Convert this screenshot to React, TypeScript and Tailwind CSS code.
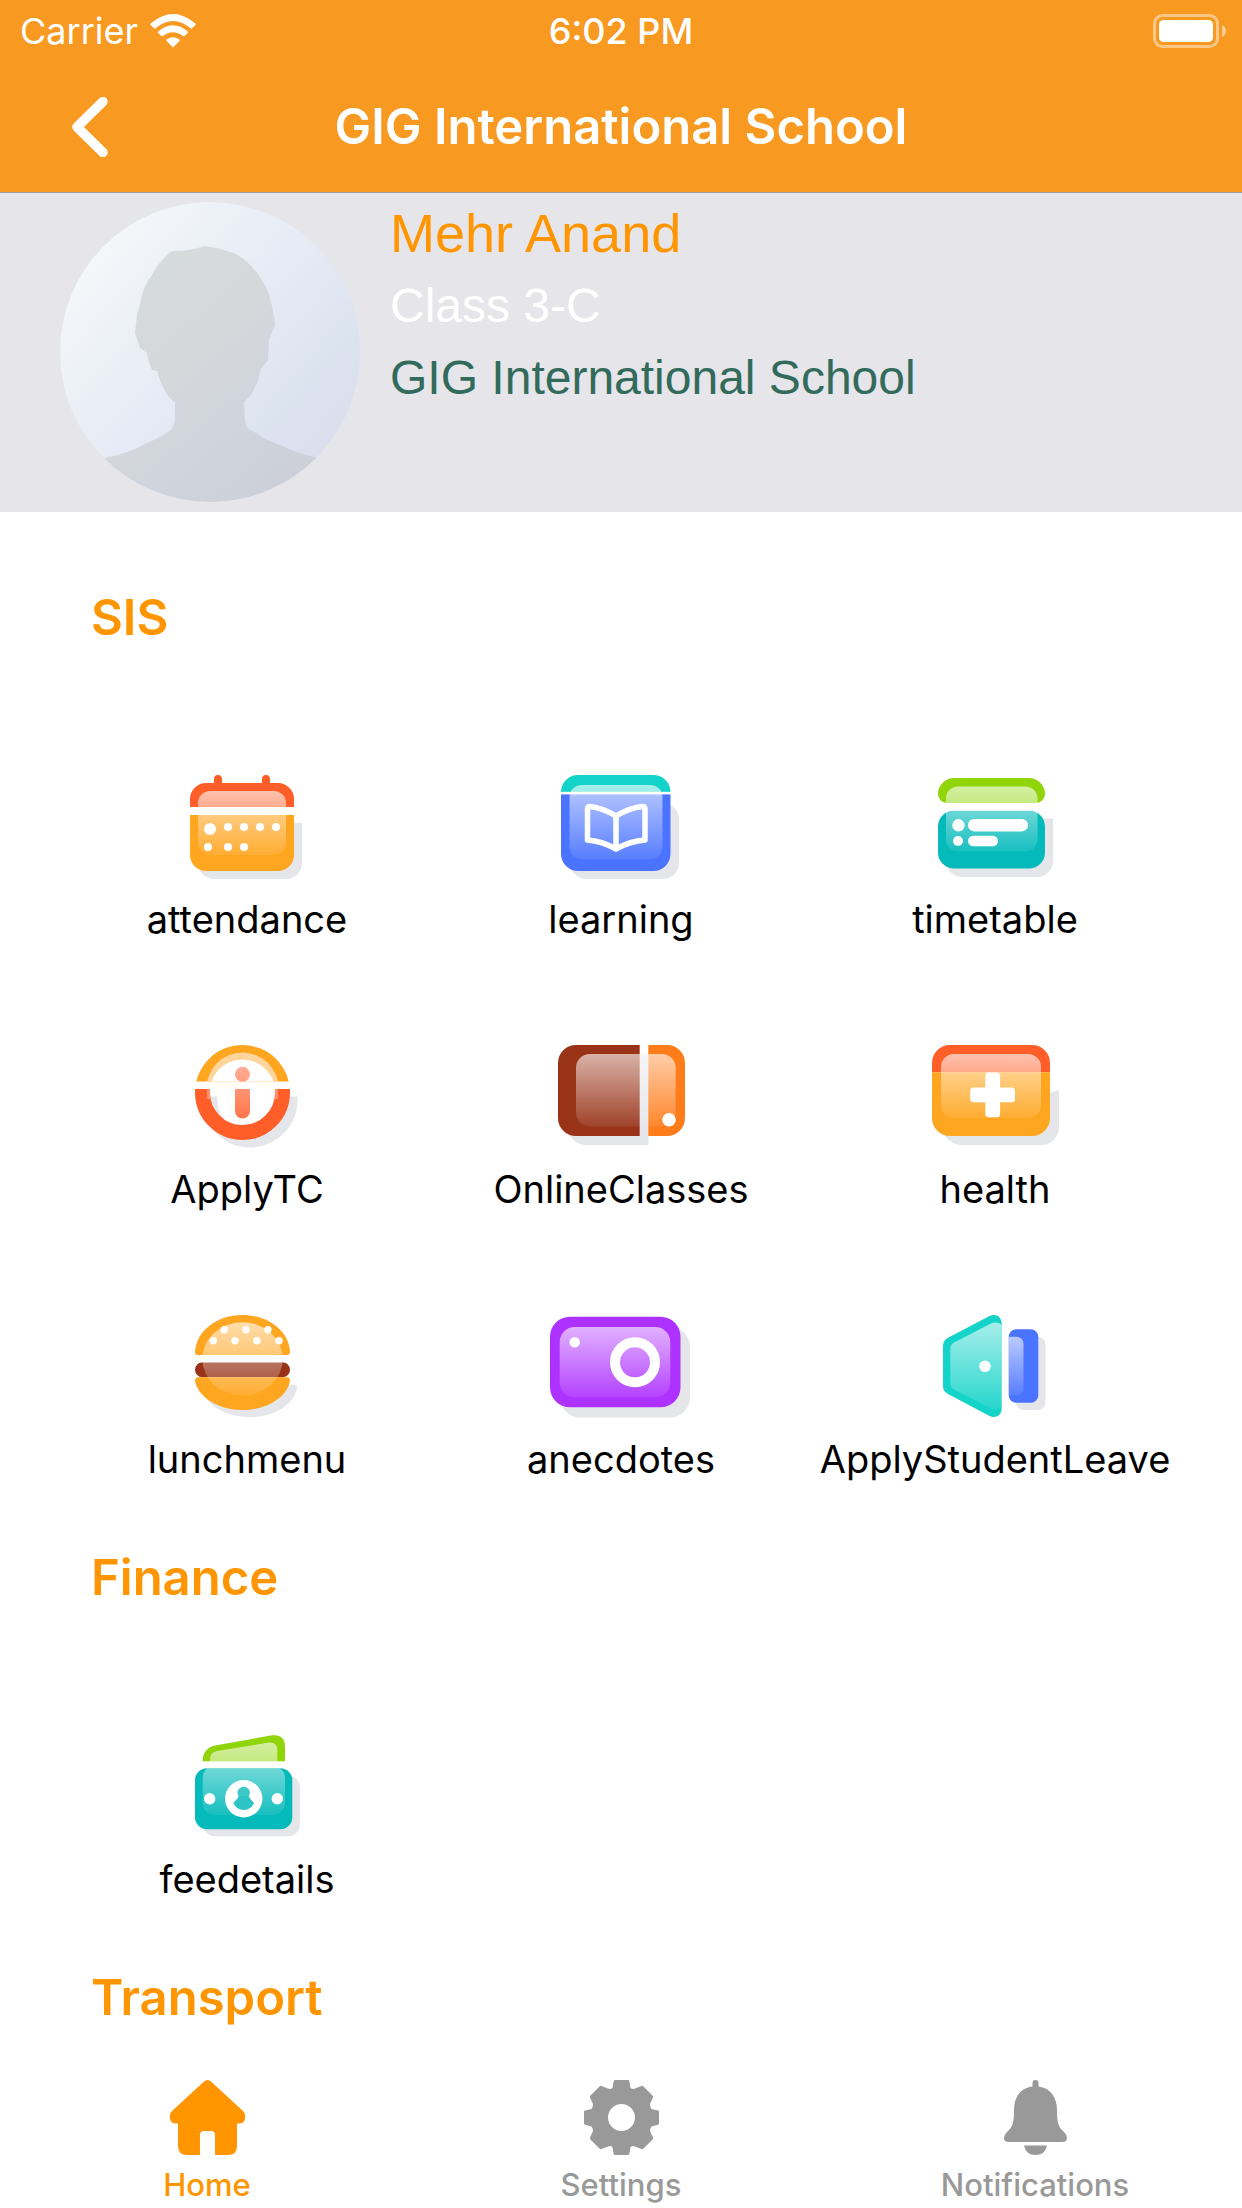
import { useId, type ReactNode } from "react";

const SHADOW = "#e5e6ea";

function Tile({ children }: { children: (glass: string) => ReactNode }) {
  const id = useId();
  return (
    <svg viewBox="0 0 144 105" className="h-[105px] w-36" aria-hidden="true">
      <defs>
        <linearGradient id={id} x1="0" y1="0" x2="0" y2="1">
          <stop offset="0" stopColor="#fff" stopOpacity="0.62" />
          <stop offset="1" stopColor="#fff" stopOpacity="0.08" />
        </linearGradient>
      </defs>
      {children(`url(#${id})`)}
    </svg>
  );
}

function AttendanceIcon() {
  return (
    <Tile>
      {(glass) => (
        <>
          <path d="M23 48H127V88a16 16 0 0 1-16 16H39a16 16 0 0 1-16-16Z" fill={SHADOW} />
          <path d="M15 40H119V80a16 16 0 0 1-16 16H31a16 16 0 0 1-16-16Z" fill="#ffa621" />
          <path
            d="M15 32V24A16 16 0 0 1 31 8H39V4a4 4 0 0 1 8 0V8H87V4a4 4 0 0 1 8 0V8H103A16 16 0 0 1 119 24V32Z"
            fill="#ff5e29"
          />
          <rect x="23" y="16" width="88" height="64" rx="12" fill={glass} />
          <rect x="14" y="32" width="106" height="8" fill="#fff" />
          <g fill="#fff">
            <circle cx="35" cy="54" r="6" />
            <circle cx="53" cy="52" r="4" />
            <circle cx="69" cy="52" r="4" />
            <circle cx="85" cy="52" r="4" />
            <circle cx="101" cy="52" r="4" />
            <circle cx="33" cy="72" r="4" />
            <circle cx="53" cy="72" r="4" />
            <circle cx="69" cy="72" r="4" />
          </g>
        </>
      )}
    </Tile>
  );
}

function LearningIcon() {
  return (
    <Tile>
      {(glass) => (
        <>
          <path d="M20 28H114a16 16 0 0 1 16 16V88a16 16 0 0 1-16 16H38a18 18 0 0 1-18-18Z" fill={SHADOW} />
          <path d="M12 18V17A17 17 0 0 1 29 0H104.500A17 17 0 0 1 121.500 17V18Z" fill="#14d3c9" />
          <path d="M12 18H121.500V79a17 17 0 0 1-17 17H29a17 17 0 0 1-17-17Z" fill="#4a73ff" />
          <rect x="12" y="16.800" width="110" height="2.600" fill="#fff" />
          <rect x="20.500" y="10" width="93" height="74" rx="12" fill={glass} />
          <path
            d="M67 41Q54 33 41 31.500Q38.500 31.500 38.500 34V65Q53 66 67 74Q81 66 96 65V34Q96 31.500 93 31.500Q80 33 67 41V74"
            fill="none"
            stroke="#fff"
            strokeWidth="5.500"
            strokeLinejoin="round"
          />
        </>
      )}
    </Tile>
  );
}

function TimetableIcon() {
  return (
    <Tile>
      {(glass) => (
        <>
          <path d="M23 43.500H130V86a16 16 0 0 1-16 16H39a16 16 0 0 1-16-16Z" fill={SHADOW} />
          <path d="M31 3H106a16 16 0 0 1 16 16a9 9 0 0 1-9 9H24a9 9 0 0 1-9-9A16 16 0 0 1 31 3Z" fill="#90d40a" />
          <rect x="15" y="35.500" width="107" height="58" rx="16" fill="#04babb" />
          <rect x="23" y="11.500" width="91.500" height="65" rx="12" fill={glass} />
          <rect x="15" y="28" width="107" height="7.500" fill="#fff" />
          <g fill="#fff">
            <circle cx="35.500" cy="50.300" r="6.200" />
            <rect x="45" y="44" width="60" height="12.400" rx="6.200" />
            <circle cx="35" cy="66" r="5" />
            <rect x="45" y="60.800" width="30" height="10.400" rx="5.200" />
          </g>
        </>
      )}
    </Tile>
  );
}

function ApplyTcIcon() {
  const id = useId();
  return (
    <Tile>
      {() => (
        <>
          <defs>
            <clipPath id={`${id}t`}>
              <rect x="0" y="0" width="144" height="36.500" />
            </clipPath>
            <clipPath id={`${id}b`}>
              <rect x="0" y="44" width="144" height="61" />
            </clipPath>
            <clipPath id={`${id}s`}>
              <rect x="0" y="51.500" width="144" height="54" />
            </clipPath>
            <linearGradient id={`${id}i`} x1="0" y1="20" x2="0" y2="74" gradientUnits="userSpaceOnUse">
              <stop offset="0" stopColor="#ffb099" />
              <stop offset="1" stopColor="#ff7448" />
            </linearGradient>
          </defs>
          <circle cx="75" cy="55" r="40" fill="none" stroke={SHADOW} strokeWidth="15" clipPath={`url(#${id}s)`} />
          <g clipPath={`url(#${id}b)`}>
            <circle cx="67.500" cy="47.500" r="40" fill="none" stroke="#ff5e29" strokeWidth="15" />
            <path d="M33.500 42V54" stroke="#ff9070" strokeWidth="3" />
            <path d="M101.500 42V54" stroke="#ff9070" strokeWidth="3" />
          </g>
          <g clipPath={`url(#${id}t)`}>
            <circle cx="67.500" cy="47.500" r="47.500" fill="#ffa621" />
            <circle cx="67.500" cy="43.500" r="36" fill="#ffd59c" />
            <circle cx="67.500" cy="47.500" r="33" fill="#fff" />
          </g>
          <circle cx="67.500" cy="29.300" r="7.500" fill={`url(#${id}i)`} />
          <path d="M60 44H75V66a7.500 7.500 0 0 1-15 0Z" fill={`url(#${id}i)`} />
        </>
      )}
    </Tile>
  );
}

function OnlineClassesIcon() {
  return (
    <Tile>
      {(glass) => (
        <>
          <path d="M18 9H99.500V100H36a20 20 0 0 1-18-18Z" fill={SHADOW} />
          <path d="M90.700 0H27A18 18 0 0 0 9 18V73A18 18 0 0 0 27 91H90.700Z" fill="#983318" />
          <path d="M99.300 0H118A18 18 0 0 1 136 18V73A18 18 0 0 1 118 91H99.300Z" fill="#ff7c1a" />
          <rect x="27" y="9" width="99.700" height="72.500" rx="14" fill={glass} />
          <circle cx="120" cy="74.700" r="6.800" fill="#fff" />
        </>
      )}
    </Tile>
  );
}

function HealthIcon() {
  return (
    <Tile>
      {(glass) => (
        <>
          <path d="M18 80L127 47.500L136 45V82a18 18 0 0 1-18 18H38a22 22 0 0 1-20-20Z" fill={SHADOW} />
          <path d="M9 27.300V18A18 18 0 0 1 27 0H109A18 18 0 0 1 127 18V27.300Z" fill="#ff5e29" />
          <path d="M9 27.300H127V73A18 18 0 0 1 109 91H27A18 18 0 0 1 9 73Z" fill="#ffa621" />
          <rect x="18" y="9" width="100" height="64" rx="13" fill={glass} />
          <rect x="62.300" y="27.500" width="14.800" height="44.800" rx="3.500" fill="#fff" />
          <rect x="47.200" y="42.400" width="44.800" height="14.800" rx="3.500" fill="#fff" />
        </>
      )}
    </Tile>
  );
}

function LunchIcon() {
  return (
    <Tile>
      {(glass) => (
        <>
          <path d="M119 69.500Q122.500 69.500 122 73C119 89 100 102 75 102C56 102 40 95 32 84Z" fill={SHADOW} />
          <path d="M20 37C21 16 42 0 67.500 0S114 16 115 37Q115 40 112 40H23Q20 40 20 37Z" fill="#ffa621" />
          <rect x="20" y="47.300" width="95" height="15" rx="7.500" fill="#983318" />
          <path d="M23 62.300H112Q115 62.300 115 66C112 82 92 95 67.500 95S23 82 20 66Q20 62.300 23 62.300Z" fill="#ffa621" />
          <ellipse cx="67.500" cy="44" rx="40.200" ry="36.800" fill={glass} />
          <rect x="20" y="40" width="95" height="7.300" fill="#fff" />
          <g fill="#fff">
            <circle cx="49.300" cy="14.700" r="3.700" />
            <circle cx="71" cy="14.700" r="3.700" />
            <circle cx="93" cy="14.700" r="3.700" />
            <circle cx="38.300" cy="25.700" r="3.700" />
            <circle cx="60" cy="25.700" r="3.700" />
            <circle cx="82" cy="25.700" r="3.700" />
            <circle cx="104" cy="25.700" r="3.700" />
          </g>
        </>
      )}
    </Tile>
  );
}

function AnecdotesIcon() {
  return (
    <Tile>
      {(glass) => (
        <>
          <rect x="11" y="12" width="130" height="90.500" rx="20" fill={SHADOW} />
          <rect x="1" y="1.700" width="130.500" height="90.600" rx="20" fill="#ae32ff" />
          <rect x="10.700" y="12" width="110.600" height="70.500" rx="15" fill={glass} />
          <circle cx="25.700" cy="27.300" r="5.200" fill="#fff" />
          <circle cx="86" cy="47.300" r="20" fill="none" stroke="#fff" strokeWidth="10" />
        </>
      )}
    </Tile>
  );
}

function LeaveIcon() {
  return (
    <Tile>
      {(glass) => (
        <>
          <rect x="93" y="22" width="29.500" height="73" rx="7.500" fill={SHADOW} />
          <rect x="85.700" y="14.300" width="29.600" height="73.400" rx="7.500" fill="#4a73ff" />
          <path d="M85.700 21.700H93.500a7 7 0 0 1 7 7V73.500a7 7 0 0 1-7 7H85.700Z" fill={glass} />
          <path
            d="M20 31Q20 25.500 25 22.800L66 1.300C72-2 78.700 1 78.700 9V93C78.700 101 72 104 66 100.700L25 79Q20 76.500 20 71Z"
            fill="#14d3c9"
          />
          <path d="M27.300 34Q27.300 29.500 31 27.500L68 8.500Q74 6 78.700 10V92Q74 96 68 93.500L31 74.500Q27.300 72.500 27.300 68Z" fill={glass} />
          <circle cx="62" cy="51.300" r="5.800" fill="#fff" />
        </>
      )}
    </Tile>
  );
}

function FeeIcon() {
  return (
    <Tile>
      {(glass) => (
        <>
          <rect x="28" y="40.700" width="97" height="60.500" rx="12" fill={SHADOW} />
          <path d="M27.700 26.300V25A15 15 0 0 1 40 10.500L97 .3Q110-1 110 12V26.300Z" fill="#90d40a" />
          <rect x="20" y="33.300" width="97.300" height="61" rx="12" fill="#04babb" />
          <path
            d="M35 26.300V24Q35 17.500 42 16L94 7.500Q102.300 7 102.300 15V26.300ZM32 33.300H105Q110 37 110 43V68a12 12 0 0 1-12 12H39.700a12 12 0 0 1-12-12V43Q27.700 37 32 33.300Z"
            fill={glass}
          />
          <circle cx="68.700" cy="63.700" r="18.700" fill="#fff" />
          <circle cx="34.700" cy="63.700" r="5.700" fill="#fff" />
          <circle cx="102.300" cy="63.700" r="5.700" fill="#fff" />
          <circle cx="68.700" cy="58" r="6.200" fill="#3fc8c8" />
          <path d="M64 61H73.500Q75 64 79 68Q76 75 68.700 75T58.300 68Q62.500 64 64 61Z" fill="#2fc4c4" />
        </>
      )}
    </Tile>
  );
}

function Avatar() {
  return (
    <svg viewBox="0 0 300 300" className="size-[300px] shrink-0 rounded-full" role="img" aria-label="Student photo">
      <defs>
        <linearGradient id="avatar-bg" x1="0.1" y1="0.1" x2="0.9" y2="0.8">
          <stop offset="0" stopColor="#f6f9fa" />
          <stop offset="0.35" stopColor="#eaeff7" />
          <stop offset="0.65" stopColor="#e3e7f3" />
          <stop offset="0.8" stopColor="#dce4f0" />
          <stop offset="1" stopColor="#dbdfed" />
        </linearGradient>
        <linearGradient id="avatar-body" x1="0.1" y1="0" x2="0.8" y2="1">
          <stop offset="0" stopColor="#d6dcdd" />
          <stop offset="0.45" stopColor="#d5d7db" />
          <stop offset="0.7" stopColor="#cfd4dd" />
          <stop offset="1" stopColor="#cccfd7" />
        </linearGradient>
      </defs>
      <rect width="300" height="300" fill="url(#avatar-bg)" />
      <path
        d="M145 44L134 47L120 49Q112 48 107 53Q98 61 92 73Q84 84 82 93Q80 104 77 113L75 131L80 146L87 151Q88 160 92 168L97 169Q100 180 104 187Q108 196 115 200V218Q114 226 108 230Q98 237 87 241Q70 251 45 256V300H258V256Q240 252 227 246Q215 241 203 236Q196 230 188 227Q185 222 185 218L184 200Q192 193 195 185Q200 177 200 168L208 158L209 138L215 123Q214 110 211 101Q209 89 203 80Q197 69 188 61Q180 53 170 50Q160 46 150 45Z"
        fill="url(#avatar-body)"
      />
    </svg>
  );
}

function HomeIcon() {
  return (
    <svg viewBox="0 0 75 75" className="size-[75px]" fill="currentColor" aria-hidden="true">
      <path d="M34 1.500Q37.500-1.500 41 1.500L73 31Q76 34 75 39Q74 43.500 69 43.500H67V66Q67 75 58 75H45V55Q45 51 41 51H34Q30 51 30 55V75H17Q8 75 8 66V43.500H6Q1 43.500 0 39Q-1 34 2 31Z" />
    </svg>
  );
}

function GearIcon() {
  return (
    <svg viewBox="0 0 75 75" className="size-[75px]" fill="currentColor" aria-hidden="true">
      <path
        fillRule="evenodd"
        d="M31 0H44Q45 0 45.300 1L46.500 8Q48.500 9.500 51 8.600L57.500 6Q58.500 5.500 59.500 6.500L68.500 15.500Q69.500 16.500 69 17.500L66 24Q66 27 67.500 29L74 30.500Q75 30.500 75 31.500V43.500Q75 44.500 74 44.800L67.500 46.500Q66 48 66 51L69 57.500Q69.500 58.500 68.500 59.500L59.500 68.500Q58.500 69.500 57.500 69L51 66.400Q48.500 65.500 46.500 67L45.300 74Q45 75 44 75H31Q30 75 29.700 74L28.500 67Q26.500 65.500 24 66.400L17.500 69Q16.500 69.500 15.500 68.500L6.500 59.500Q5.500 58.500 6 57.500L9 51Q9 48 7.500 46.500L1 44.800Q0 44.500 0 43.500V31.500Q0 30.500 1 30.500L7.500 29Q9 27 9 24L6 17.500Q5.500 16.500 6.500 15.500L15.500 6.500Q16.500 5.500 17.500 6L24 8.600Q26.500 9.500 28.500 8L29.700 1Q30 0 31 0ZM37.500 24a13.500 13.500 0 1 0 0 27a13.500 13.500 0 1 0 0-27Z"
      />
    </svg>
  );
}

function BellIcon() {
  return (
    <svg viewBox="0 0 75 75" className="size-[75px]" fill="currentColor" aria-hidden="true">
      <path d="M34.500 3Q34.500 0 37.500 0T40.500 3V6.500C53 8 59 18 59 30C59 42 60 47 66 52Q69 55 69 58Q69 62 64 62H11Q6 62 6 58Q6 55 9 52C15 47 16 42 16 30C16 18 22 8 34.500 6.500Z" />
      <path d="M26 65.500H49Q47 75 37.500 75T26 65.500Z" />
    </svg>
  );
}

type Item = { label: string; Icon: () => ReactNode };

const sections: { title: string; items: Item[] }[] = [
  {
    title: "SIS",
    items: [
      { label: "attendance", Icon: AttendanceIcon },
      { label: "learning", Icon: LearningIcon },
      { label: "timetable", Icon: TimetableIcon },
      { label: "ApplyTC", Icon: ApplyTcIcon },
      { label: "OnlineClasses", Icon: OnlineClassesIcon },
      { label: "health", Icon: HealthIcon },
      { label: "lunchmenu", Icon: LunchIcon },
      { label: "anecdotes", Icon: AnecdotesIcon },
      { label: "ApplyStudentLeave", Icon: LeaveIcon },
    ],
  },
  { title: "Finance", items: [{ label: "feedetails", Icon: FeeIcon }] },
  { title: "Transport", items: [] },
];

const tabs = [
  { label: "Home", Icon: HomeIcon, active: true },
  { label: "Settings", Icon: GearIcon, active: false },
  { label: "Notifications", Icon: BellIcon, active: false },
];

function StatusBar() {
  return (
    <div className="grid h-[62px] grid-cols-3 items-center px-4 text-4xl leading-[62px]">
      <div className="flex items-center gap-3 pl-1">
        <span>Carrier</span>
        <svg viewBox="0 0 46 34" className="h-[34px] w-[46px]" aria-label="Wi-Fi" fill="#fff">
          <path d="M23 33.500L16.500 27Q15.800 26 17 25.200Q23 21.500 29 25.200Q30.200 26 29.500 27Z" />
          <path d="M8.200 17.500Q23 5 37.800 17.500Q38.500 18.300 37.800 19L34.500 22Q33.800 22.700 33 22Q23 14.500 13 22Q12.200 22.700 11.500 22L8.200 19Q7.500 18.300 8.200 17.500Z" />
          <path d="M.6 9.500Q23-9.500 45.400 9.500Q46 10.200 45.400 11L42 14.300Q41.300 15 40.500 14.300Q23-.5 5.500 14.300Q4.700 15 4 14.300L.6 11Q0 10.200.6 9.500Z" />
        </svg>
      </div>
      <span className="text-center font-medium">6:02 PM</span>
      <svg viewBox="0 0 73 34" className="h-[34px] w-[73px] justify-self-end" aria-label="Battery full">
        <rect x="1.500" y="1.500" width="63" height="31" rx="8" fill="none" stroke="#fff" strokeOpacity="0.45" strokeWidth="3" />
        <rect x="6" y="6" width="54" height="22" rx="4.500" fill="#fff" />
        <path d="M69 11Q73 13 73 17T69 23Z" fill="#fff" fillOpacity="0.5" />
      </svg>
    </div>
  );
}

export default function App() {
  return (
    <div className="flex h-screen flex-col overflow-hidden bg-white font-['Inter',sans-serif] text-black">
      <header className="shrink-0 border-b border-[#9a9ba3] bg-[#f89a22] text-white">
        <StatusBar />
        <div className="grid h-[130px] grid-cols-[1fr_auto_1fr] items-center px-[60px]">
          <button type="button" aria-label="Back" className="justify-self-start px-[11px]">
            <svg viewBox="0 0 37 60" className="h-[60px] w-[37px]" aria-hidden="true">
              <path d="M32 4.500L6 30L32 55.500" fill="none" stroke="#fff" strokeWidth="9.500" strokeLinecap="round" strokeLinejoin="round" />
            </svg>
          </button>
          <h1 className="text-center text-[49px] leading-[60px] font-semibold">GIG International School</h1>
        </div>
      </header>

      <section className="flex shrink-0 gap-[30px] bg-[#e5e5ea] px-[60px] pt-[9px] pb-[10px] font-['Liberation_Sans',Arial,sans-serif]">
        <Avatar />
        <div className="text-5xl">
          <h2 className="pb-[6px] text-[54px] leading-[62px] text-[#ff9500]">Mehr Anand</h2>
          <p className="leading-[72px] text-white">Class 3-C</p>
          <p className="leading-[72px] text-[#326b5b]">GIG International School</p>
        </div>
      </section>

      <main className="min-h-0 flex-1 overflow-hidden px-[60px] pt-[76px]">
        {sections.map(({ title, items }) => (
          <section key={title} className="pb-[23px]">
            <h2 className="px-[31px] text-[49px] leading-[60px] font-semibold text-[#ff9500]">{title}</h2>
            <ul className="grid grid-cols-3 pt-[67px]">
              {items.map(({ label, Icon }) => (
                <li key={label} className="h-[270px] pt-[60px]">
                  <button type="button" className="flex w-full flex-col items-center gap-[14px]">
                    <Icon />
                    <span className="text-[38px] leading-[50px]">{label}</span>
                  </button>
                </li>
              ))}
            </ul>
          </section>
        ))}
      </main>

      <nav className="grid h-[147px] shrink-0 grid-cols-3 bg-white pt-[19px]">
        {tabs.map(({ label, Icon, active }) => (
          <a
            key={label}
            href={`#${label.toLowerCase()}`}
            aria-current={active ? "page" : undefined}
            className="flex flex-col items-center gap-3 text-[#999999] aria-[current=page]:text-[#ff9500]"
          >
            <Icon />
            <span className="text-[31px] leading-9 font-medium">{label}</span>
          </a>
        ))}
      </nav>
    </div>
  );
}
